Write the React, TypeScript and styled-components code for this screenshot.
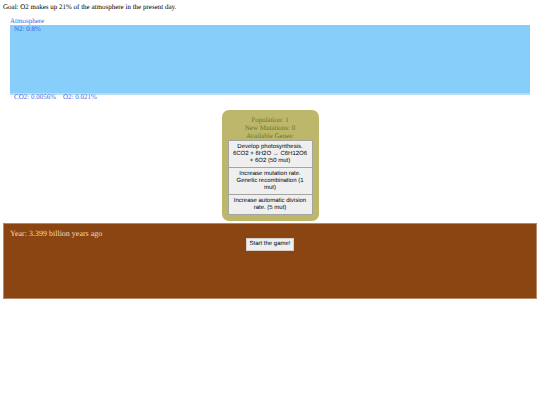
import React from "react";
import styled, { createGlobalStyle } from "styled-components";

const GlobalStyle = createGlobalStyle`
  * { box-sizing: border-box; }
  body {
    margin: 0;
    padding: 3px;
    background: #fff;
    color: #000;
    font: 7px/8px "Liberation Serif", serif;
    text-rendering: geometricPrecision;
  }
`;

const Page = styled.main`
  display: flex;
  flex-direction: column;
`;

const Goal = styled.p`
  margin: 0;
`;

const Atmosphere = styled.section`
  margin: 6px 7px 0;
  color: royalblue;
`;

const Title = styled.h2`
  margin: 0;
  font-size: 7px;
  font-weight: normal;
`;

const GasBar = styled.div`
  height: 68px;
  padding-left: 4px;
  background: lightskyblue;
`;

const TraceGases = styled.div`
  display: flex;
  gap: 7px;
  padding-left: 4px;
  border-top: 2px solid #b8dcf2;
  line-height: 5px;
`;

const Cell = styled.section`
  align-self: center;
  width: 97px;
  margin: 10px 0 2px;
  padding: 6px;
  border-radius: 7px;
  background: darkkhaki;
  color: #66782a;
  text-align: center;
`;

const Stat = styled.p`
  margin: 0;
`;

const Year = styled.p`
  margin: 0;
  font-size: 8px;
`;

const Genes = styled.div`
  display: flex;
  flex-direction: column;
`;

const Button = styled.button`
  margin: 0;
  padding: 2px;
  border: 1px solid #a5a5a0;
  border-radius: 0;
  background: #efefef;
  color: #000;
  font: 6px/7px "Liberation Sans", sans-serif;
  text-rendering: inherit;
`;

const GeneButton = styled(Button)`
  padding: 3px 2px 2px;

  & + & {
    border-top: 0;
  }
`;

const Ground = styled.section`
  display: flex;
  flex-direction: column;
  height: 76px;
  padding: 6px;
  border: 1px solid #b58a68;
  background: saddlebrown;
  color: wheat;
`;

const StartButton = styled(Button)`
  align-self: center;
  border-color: #d8d0c8;
`;

const genes = [
  "Develop photosynthesis. 6CO2 + 6H2O → C6H12O6 + 6O2 (50 mut)",
  "Increase mutation rate. Genetic recombination (1 mut)",
  "Increase automatic division rate. (5 mut)",
];

export default function App() {
  return (
    <>
      <GlobalStyle />
      <Page>
        <Goal>Goal: O2 makes up 21% of the atmosphere in the present day.</Goal>
        <Atmosphere>
          <Title>Atmosphere</Title>
          <GasBar>N2: 0.8%</GasBar>
          <TraceGases>
            <span>CO2: 0.0056%</span>
            <span>O2: 0.021%</span>
          </TraceGases>
        </Atmosphere>
        <Cell>
          <Stat>Population: 1</Stat>
          <Stat>New Mutations: 0</Stat>
          <Stat>Available Genes:</Stat>
          <Genes>
            {genes.map((gene) => (
              <GeneButton key={gene} type="button">{gene}</GeneButton>
            ))}
          </Genes>
        </Cell>
        <Ground>
          <Year>Year: 3.399 billion years ago</Year>
          <StartButton type="button">Start the game!</StartButton>
        </Ground>
      </Page>
    </>
  );
}
